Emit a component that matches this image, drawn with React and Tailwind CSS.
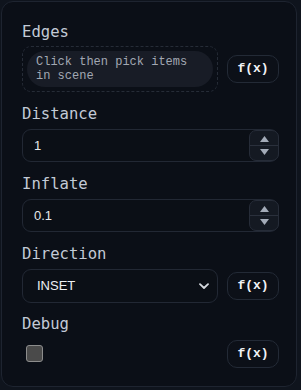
import React from "react";

const mono = { fontFamily: '"Liberation Mono", "DejaVu Sans Mono", monospace' };
const labelFont = { fontFamily: '"DejaVu Sans Mono", "Liberation Mono", monospace' };
const sans = { fontFamily: '"Liberation Sans", Arial, sans-serif' };

function Label({ children }) {
  return (
    <div className="h-[20px] leading-[23px] text-[15.6px] text-[#c3cad6]" style={labelFont}>
      {children}
    </div>
  );
}

function FxButton() {
  return (
    <button
      className="w-[52px] h-[28px] shrink-0 rounded-[10px] border border-[#232a36] bg-[#0c1018] text-[13px] font-bold text-[#f1f3f6] flex items-center justify-center"
      style={mono}
    >
      f(x)
    </button>
  );
}

function Spinner() {
  return (
    <div className="w-[30px] self-stretch mr-[-1px] rounded-[7px] border border-[#262c38] bg-[#141922] flex flex-col items-center justify-center">
      <svg width="9" height="6" viewBox="0 0 9 6" className="mb-[3px]">
        <path d="M4.5 0 L9 6 L0 6 Z" fill="#a3abb8" />
      </svg>
      <div className="w-full h-px bg-[#2a303c]" />
      <svg width="9" height="6" viewBox="0 0 9 6" className="mt-[3px]">
        <path d="M0 0 L9 0 L4.5 6 Z" fill="#a3abb8" />
      </svg>
    </div>
  );
}

function NumberInput({ value }) {
  return (
    <div className="h-[33px] w-[257px] rounded-[9px] border border-[#222834] bg-[#0b0f16] flex items-stretch">
      <div className="flex-1 flex items-center pl-[11px] text-[13px] text-[#e6e8ec]" style={sans}>
        {value}
      </div>
      <Spinner />
    </div>
  );
}

export default function App() {
  return (
    <div className="w-[301px] h-[390px] bg-[#0f141d] pt-[1px] pl-[1px]">
      <div className="w-[296px] h-[386px] rounded-[12px] border border-[#1e2430] bg-[#0b0f17] pl-[20px] pt-[19px]">
        <Label>Edges</Label>
        <div className="mt-[5px] flex items-center gap-[9px]">
          <div className="w-[196px] h-[46px] rounded-[9px] border border-dashed border-[#262c37] p-[4px]">
            <div
              className="h-[36px] rounded-full bg-[#181c26] pl-[9px] flex flex-col justify-center text-[12px] leading-[14px] text-[#a2a8b3]"
              style={mono}
            >
              <div>Click then pick items</div>
              <div>in scene</div>
            </div>
          </div>
          <FxButton />
        </div>

        <div className="mt-[11px]">
          <Label>Distance</Label>
        </div>
        <div className="mt-[6px]">
          <NumberInput value="1" />
        </div>

        <div className="mt-[11px]">
          <Label>Inflate</Label>
        </div>
        <div className="mt-[6px]">
          <NumberInput value="0.1" />
        </div>

        <div className="mt-[11px]">
          <Label>Direction</Label>
        </div>
        <div className="mt-[6px] flex items-center gap-[9px]">
          <div className="w-[196px] h-[34px] rounded-[9px] border border-[#222834] bg-[#0b0f16] flex items-center justify-between pl-[14px] pr-[8px]">
            <span className="text-[13px] text-[#eef0f3]" style={sans}>INSET</span>
            <svg width="10" height="7" viewBox="0 0 10 7">
              <path d="M1 1.2 L5 5 L9 1.2" fill="none" stroke="#d5d9df" strokeWidth="1.8" strokeLinecap="round" strokeLinejoin="round" />
            </svg>
          </div>
          <FxButton />
        </div>

        <div className="mt-[10px]">
          <Label>Debug</Label>
        </div>
        <div className="mt-[6px] h-[29px] flex items-center justify-between w-[257px]">
          <div className="ml-[4px] w-[17px] h-[17px] rounded-[3px] border border-[#8c8c8c] bg-[#4a4a4a]" />
          <FxButton />
        </div>
      </div>
    </div>
  );
}
